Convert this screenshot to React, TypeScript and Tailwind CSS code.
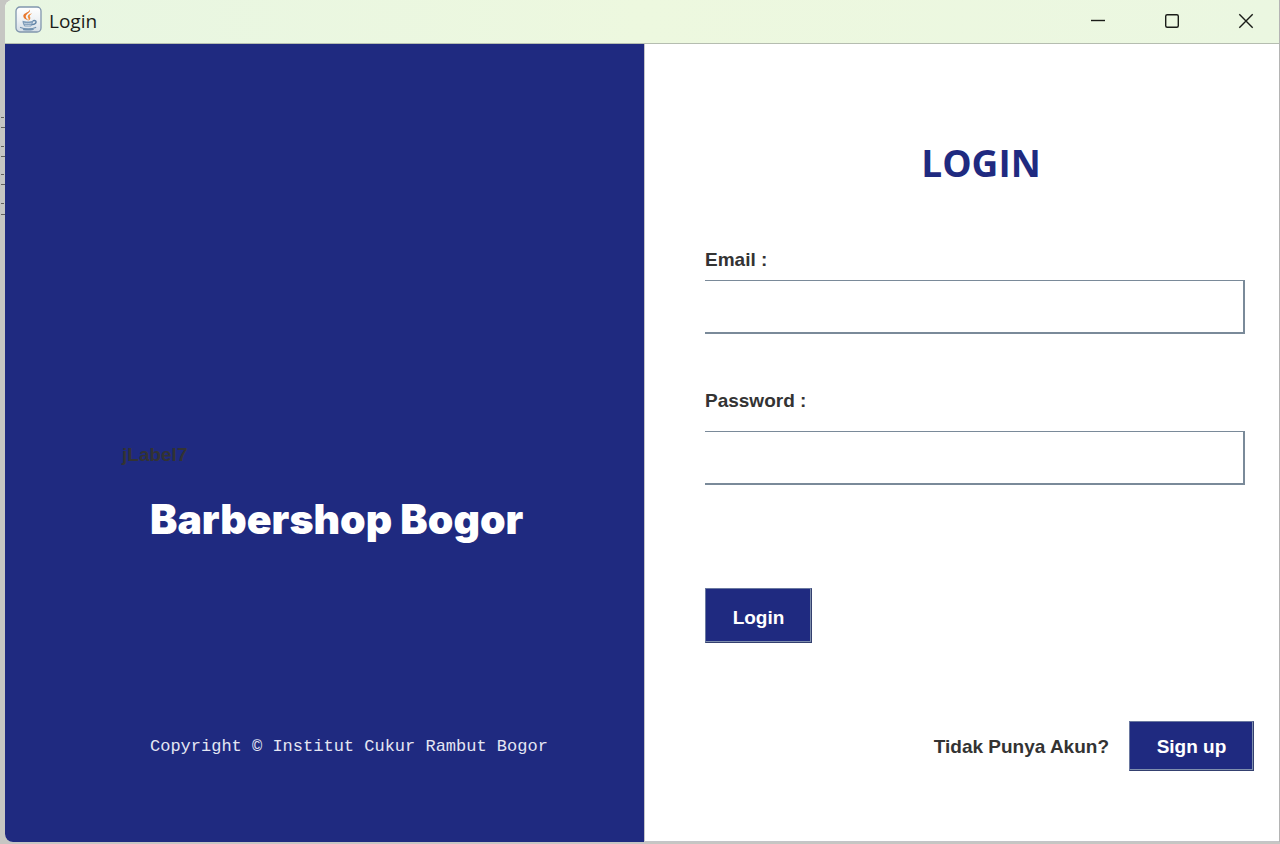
import { useState } from "react";
import type { FormEvent, InputHTMLAttributes, ReactNode } from "react";

function JavaIcon() {
  return (
    <svg width="28" height="28" viewBox="0 0 28 28" fill="none" aria-hidden="true">
      <defs>
        <linearGradient id="tile" x1="0" y1="0" x2="0" y2="1">
          <stop offset="0" stopColor="#ffffff" />
          <stop offset="0.5" stopColor="#eef2f5" />
          <stop offset="1" stopColor="#d3dde6" />
        </linearGradient>
      </defs>
      <rect x="1" y="1" width="25" height="25" rx="4" fill="url(#tile)" stroke="#8096ad" strokeWidth="1.3" />
      <path d="M14.800 3.500c1.400 2.800-4 4.300-4.100 7 0 1.700 1.700 2.800 2.600 4-3-1-5.500-2.800-4.900-5.200C9 6.900 14.500 6.300 14.800 3.500Z" fill="#e8762b" />
      <path d="M17.200 7.200c-3.300.8-4.900 2.200-4.400 3.900.4 1.200 1.400 1.700.5 3.600 2.500-1.300 2.300-2.900 1.600-3.900-.7-1.200.5-2.300 2.300-3.600Z" fill="#ef8a3c" />
      <path d="M7.500 14.800c2.800.9 7.700.9 10.600 0 0 2.300-.9 4.600-2.200 5.700H9.700c-1.300-1.100-2.200-3.400-2.200-5.700Z" fill="#7f9dba" />
      <path d="M9 17.200c2.200.6 5.400.6 7.600 0M9.800 19.200c1.800.4 4.300.4 6 0" stroke="#d9e3ec" strokeWidth="0.7" />
      <path d="M18.300 14.700c4-.9 3.700 3.300-1 3.900" stroke="#6486a8" strokeWidth="1.400" strokeLinecap="round" />
      <path d="M5.500 21.500c3.500 1.700 12 1.700 15.200-.1M8.500 23.600c3.500.5 7 .4 9.700-.3" stroke="#7292b0" strokeWidth="1.200" strokeLinecap="round" />
    </svg>
  );
}

function CaptionButton({ label, children }: { label: string; children: ReactNode }) {
  return (
    <button type="button" aria-label={label} className="flex w-[74px] items-center justify-center">
      <svg width="16" height="16" viewBox="0 0 16 16" fill="none" stroke="#1a1c18" strokeWidth="1.4" aria-hidden="true">
        {children}
      </svg>
    </button>
  );
}

function TitleBar() {
  return (
    <header className="flex h-[44px] shrink-0 items-stretch justify-between border-b border-[#b5bdb0] bg-linear-to-r from-[#e8f6e2] via-[#edf8df] to-[#ebf7e1]">
      <div className="flex items-center gap-1.5 pb-1 pl-2.5">
        <JavaIcon />
        <span className="pt-0.5 font-['Open_Sans','Noto_Sans',sans-serif] text-[19px] leading-6 text-[#1b1d1a]">Login</span>
      </div>
      <div className="-mr-1 flex pb-0.5">
        <CaptionButton label="Minimize">
          <path d="M1 7.500h14" />
        </CaptionButton>
        <CaptionButton label="Maximize">
          <rect x="1.700" y="1.700" width="12.600" height="12.600" rx="1.500" />
        </CaptionButton>
        <CaptionButton label="Close">
          <path d="M1.300 1.300l13.400 13.400M14.700 1.300L1.300 14.700" />
        </CaptionButton>
      </div>
    </header>
  );
}

function Field({ id, label, className, ...rest }: { id: string; label: string } & InputHTMLAttributes<HTMLInputElement>) {
  return (
    <div className={className}>
      <label htmlFor={id} className="text-[19px] leading-6 font-bold text-[#333333]">
        {label}
      </label>
      <input
        id={id}
        className="h-[54px] w-full border-t border-r-2 border-b-2 border-[#7a8a99] bg-white px-2 text-[19px] text-[#333333] outline-none"
        {...rest}
      />
    </div>
  );
}

const buttonStyle =
  "border border-t-[#6a78a0] border-l-[#6a78a0] border-r-[#34406f] border-b-[#34406f] bg-[#1f2a80] text-[19px] leading-6 font-bold text-white shadow-[inset_-1px_-1px_0_#7f8fae]";

export default function App() {
  const [email, setEmail] = useState("");
  const [password, setPassword] = useState("");
  const submit = (event: FormEvent) => event.preventDefault();

  return (
    <div className="flex min-h-screen bg-[#c6c6c3] pb-0.5 font-['Liberation_Sans',Arial,sans-serif]">
      <svg width="5" height="120" viewBox="0 0 5 120" className="mt-[105px] shrink-0" stroke="#62625e" aria-hidden="true">
        <path d="M1 12.500h3M1 22.500h4M1 41.500h3M1 51.500h4M1 69.500h3M1 79.500h4M1 98.500h3M1 109.500h4" />
      </svg>

      <div className="flex min-w-0 flex-1 flex-col overflow-hidden rounded-tl-lg rounded-bl-lg border-r border-[#b4b4b4] bg-white">
        <TitleBar />
        <div className="grid flex-1 grid-cols-[639fr_635fr]">
          <section className="flex min-w-0 flex-col bg-[#1f2a80]">
            <p className="mt-[399px] pl-[117px] text-[19px] leading-6 font-bold text-[#333333]">jLabel7</p>
            <h1 className="mt-[26px] pl-[145px] font-['Inter','Arial_Black',sans-serif] text-[41px] leading-[52px] font-black whitespace-nowrap text-white">
              Barbershop Bogor
            </h1>
            <p className="mt-auto mb-[83px] pl-[145px] font-['Liberation_Mono',monospace] text-[17px] leading-6 whitespace-nowrap text-[#e4e6f3]">
              Copyright © Institut Cukur Rambut Bogor
            </p>
          </section>

          <form onSubmit={submit} className="flex min-w-0 flex-col border-b border-l border-[#c4c4c8] bg-white pl-[60px]">
            <h2 className="mt-[92px] self-center pr-[22px] font-['Open_Sans','Noto_Sans',sans-serif] text-[37px] leading-[54px] font-bold text-[#1f2a80]">
              LOGIN
            </h2>
            <Field
              id="email"
              label="Email :"
              type="email"
              className="mt-[58px] mr-[34px] flex flex-col gap-2"
              value={email}
              onChange={(event) => setEmail(event.target.value)}
            />
            <Field
              id="password"
              label="Password :"
              type="password"
              className="mt-[55px] mr-[34px] flex flex-col gap-[18px]"
              value={password}
              onChange={(event) => setPassword(event.target.value)}
            />
            <button type="submit" className={`${buttonStyle} mt-[103px] h-[55px] w-[107px] pt-1`}>
              Login
            </button>
            <div className="mt-auto mr-[25px] mb-[70px] flex items-center justify-end gap-5">
              <span className="pt-0.5 text-[19px] leading-6 font-bold text-[#333333]">Tidak Punya Akun?</span>
              <button type="button" className={`${buttonStyle} h-[50px] w-[125px] pt-0.5`}>
                Sign up
              </button>
            </div>
          </form>
        </div>
      </div>
    </div>
  );
}
